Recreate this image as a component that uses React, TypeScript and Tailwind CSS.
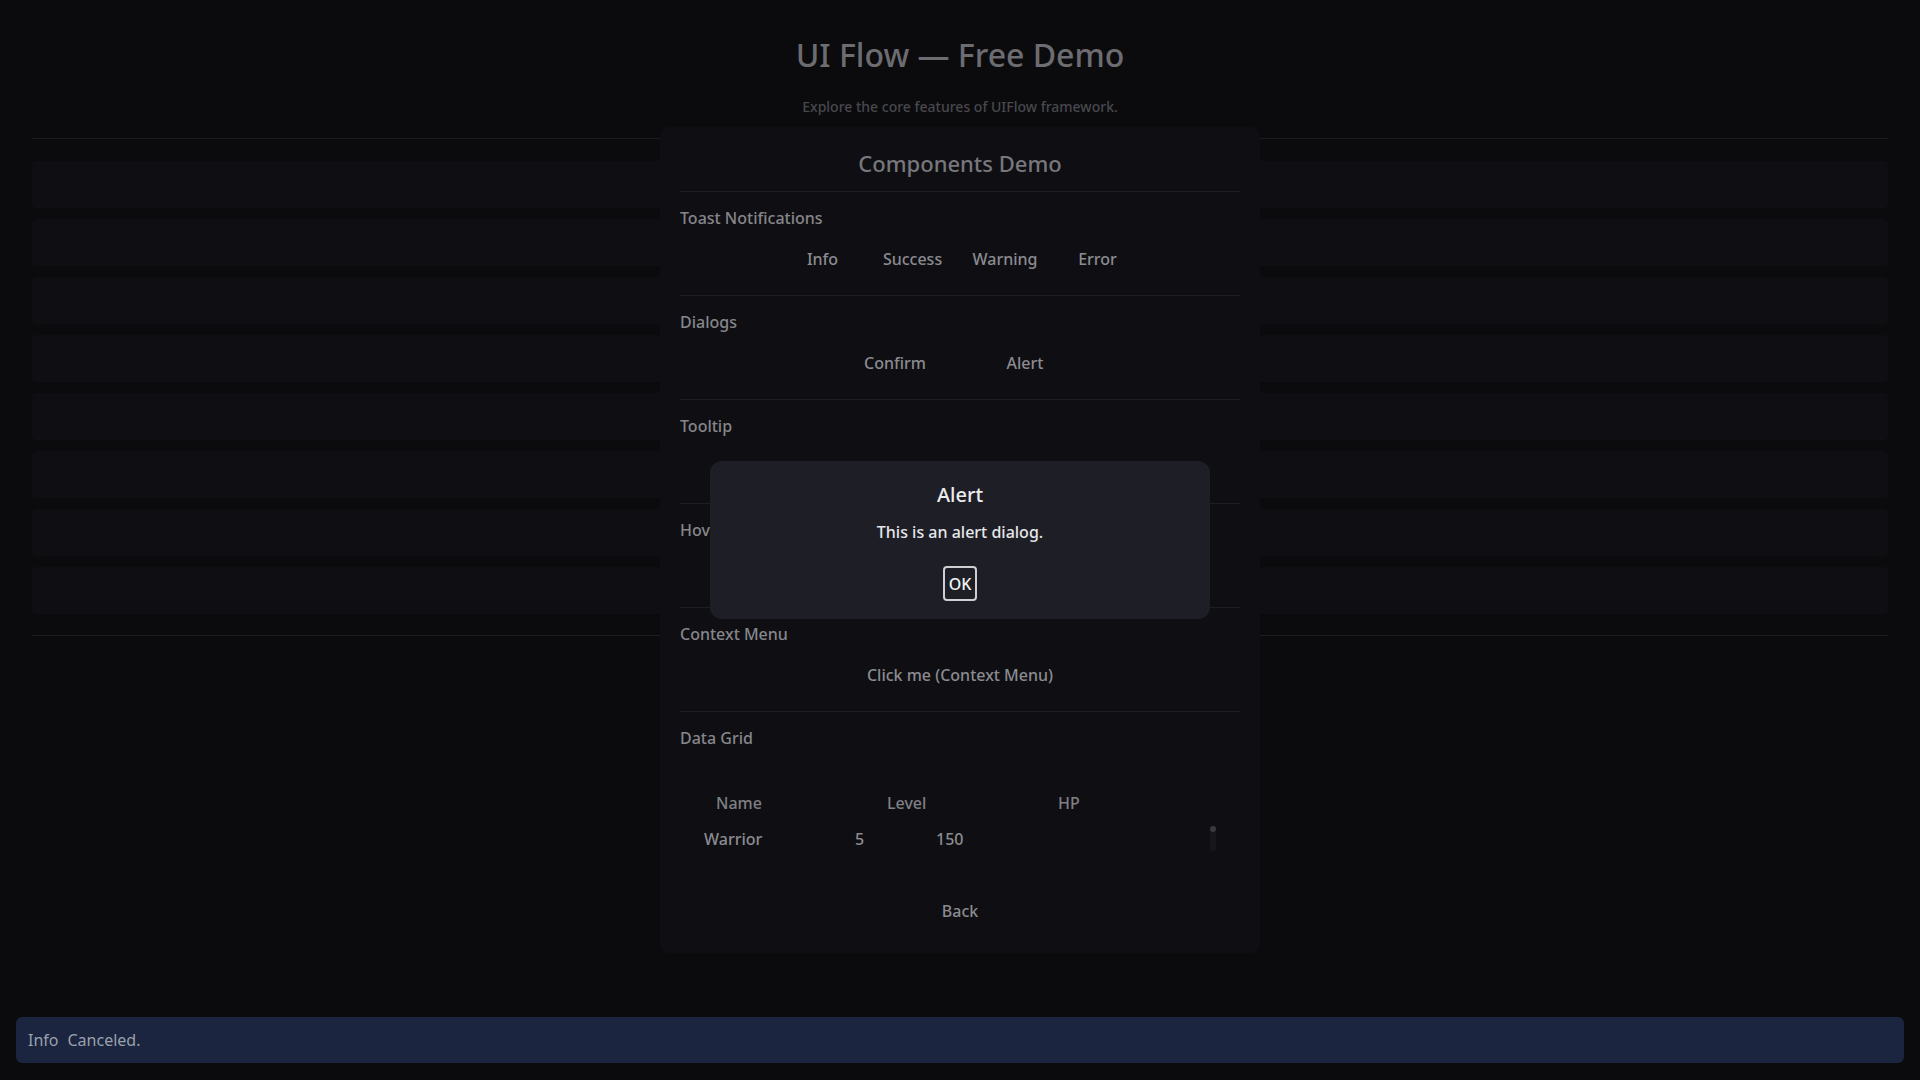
import React from "react";

const font = { fontFamily: "'Noto Sans', 'Open Sans', sans-serif" };

function Section({ label, children }: { label: string; children?: React.ReactNode }) {
  return (
    <div className="border-t border-[#1d1d22] pt-[15px] pb-[18px]">
      <div className="h-[22px] text-[16px] font-medium leading-[22px] text-[#86868b]">{label}</div>
      <div className="mt-[12px] flex h-[36px] items-center justify-center gap-[10px]">{children}</div>
    </div>
  );
}

function Btn({ children, wide }: { children: React.ReactNode; wide?: boolean }) {
  return (
    <button
      className={`h-[36px] px-[10px] text-[16px] font-medium text-[#8b8b90] ${wide ? "min-w-[120px]" : "min-w-[80px]"}`}
    >
      {children}
    </button>
  );
}

export default function App() {
  const stripes = [0, 1, 2, 3, 4, 5, 6, 7];

  return (
    <div className="min-h-screen bg-[#0b0b0e]" style={font}>
      <div className="flex flex-col items-center pt-[35px]">
        <h1 className="h-[40px] text-[32px] font-medium leading-[40px] text-[#6c6c71]">UI Flow — Free Demo</h1>
        <p className="mt-[22px] h-[20px] text-[14px] font-medium leading-[20px] text-[#48484d]">
          Explore the core features of UIFlow framework.
        </p>
      </div>

      <div className="mt-[10px] grid">
        {/* list behind the card */}
        <div className="mx-[32px] mt-[11px] self-start border-y border-[#1b1b20] pt-[22px] pb-[21px] [grid-area:1/1]">
          <div className="flex flex-col gap-[11px]">
            {stripes.map((i) => (
              <div key={i} className="h-[47px] rounded-[4px] bg-[#0f0f13]" />
            ))}
          </div>
        </div>

        <div className="z-10 mx-auto w-[600px] self-start rounded-[8px] bg-[#0f0f13] px-[20px] [grid-area:1/1]">
          <div className="pt-[20px] pb-[12px] text-center text-[22px] font-medium leading-[32px] text-[#77777c]">
            Components Demo
          </div>

          <Section label="Toast Notifications">
            <Btn>Info</Btn>
            <Btn>Success</Btn>
            <Btn>Warning</Btn>
            <Btn>Error</Btn>
          </Section>

          <Section label="Dialogs">
            <Btn wide>Confirm</Btn>
            <Btn wide>Alert</Btn>
          </Section>

          <Section label="Tooltip" />
          <Section label="Hover Card" />

          <Section label="Context Menu">
            <button className="h-[36px] px-[10px] text-[16px] font-medium text-[#8b8b90]">Click me (Context Menu)</button>
          </Section>

          <div className="border-t border-[#1d1d22] pt-[15px] pb-[24px]">
            <div className="h-[22px] text-[16px] font-medium leading-[22px] text-[#86868b]">Data Grid</div>
            <div className="mt-[36px] flex h-[36px] items-center pl-[36px] text-[16px] font-medium text-[#7f7f84]">
              <div className="w-[171px]">Name</div>
              <div className="w-[171px]">Level</div>
              <div>HP</div>
            </div>
            <div className="flex h-[36px] items-start pl-[24px] pr-[24px] text-[16px] font-medium text-[#8b8b90]">
              <div className="flex h-[36px] flex-1 items-center">
                <div className="w-[151px]">Warrior</div>
                <div className="w-[81px]">5</div>
                <div>150</div>
              </div>
              <div className="mt-[5px] flex h-[25px] w-[6px] flex-col rounded-full bg-[#16161b]">
                <div className="h-[6px] w-[6px] rounded-full bg-[#3a3a40]" />
              </div>
            </div>
            <div className="mt-[36px] flex h-[36px] items-center justify-center">
              <button className="px-[10px] text-[16px] font-medium text-[#8b8b90]">Back</button>
            </div>
          </div>
        </div>
      </div>

      {/* alert dialog */}
      <div className="fixed inset-0 z-20 flex items-center justify-center">
        <div className="flex h-[158px] w-[500px] flex-col items-center rounded-[12px] bg-[#1e1f26] pt-[20px]">
          <div className="h-[28px] text-[20px] font-medium leading-[28px] text-[#ececef]">Alert</div>
          <div className="mt-[12px] h-[22px] text-[16px] font-medium leading-[22px] text-[#e6e6ea]">
            This is an alert dialog.
          </div>
          <button className="mt-[23px] flex h-[35px] w-[34px] items-center justify-center rounded-[4px] border-2 border-[#cfcfd2] text-[16px] font-medium text-[#f4f4f6]">
            OK
          </button>
        </div>
      </div>

      {/* toast */}
      <div className="fixed right-[16px] bottom-[17px] left-[16px] z-30 flex h-[46px] items-center gap-[9px] rounded-[6px] bg-[#1b2540] px-[12px] text-[16px] text-[#9aa0ac]">
        <span>Info</span>
        <span>Canceled.</span>
      </div>
    </div>
  );
}
